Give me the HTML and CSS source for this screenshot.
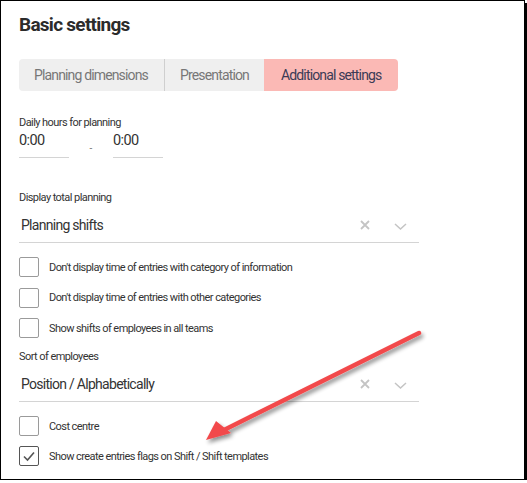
FILE: index.html
```html
<!DOCTYPE html>
<html>
<head>
<meta charset="utf-8">
<link rel="stylesheet" href="styles.css">
</head>
<body>
<div class="frame">
  <h1 class="title">Basic settings</h1>
  <div class="tabs">
    <div class="tab tab-dim">Planning dimensions</div>
    <div class="tab tab-pres">Presentation</div>
    <div class="tab tab-add active">Additional settings</div>
  </div>

  <div class="label label-hours">Daily hours for planning</div>
  <div class="hours">
    <div class="time">0:00</div>
    <div class="dash">-</div>
    <div class="time">0:00</div>
  </div>

  <div class="label label-display">Display total planning</div>
  <div class="select">
    <span class="select-value">Planning shifts</span>
    <span class="select-icons">
      <svg class="icon-x" width="10" height="10" viewBox="0 0 10 10"><path d="M1 1 L9 9 M9 1 L1 9" stroke="#c4c4c4" stroke-width="1.8" fill="none"/></svg>
      <svg class="icon-chev" width="13" height="7" viewBox="0 0 13 7"><path d="M1 1 L6.5 6 L12 1" stroke="#c4c4c4" stroke-width="1.5" fill="none"/></svg>
    </span>
  </div>

  <div class="checks">
    <div class="check"><span class="box"></span><span class="check-text">Don't display time of entries with category of information</span></div>
    <div class="check"><span class="box"></span><span class="check-text">Don't display time of entries with other categories</span></div>
    <div class="check"><span class="box"></span><span class="check-text">Show shifts of employees in all teams</span></div>
  </div>

  <div class="label label-sort">Sort of employees</div>
  <div class="select select-sort">
    <span class="select-value">Position / Alphabetically</span>
    <span class="select-icons">
      <svg class="icon-x" width="10" height="10" viewBox="0 0 10 10"><path d="M1 1 L9 9 M9 1 L1 9" stroke="#c4c4c4" stroke-width="1.8" fill="none"/></svg>
      <svg class="icon-chev" width="13" height="7" viewBox="0 0 13 7"><path d="M1 1 L6.5 6 L12 1" stroke="#c4c4c4" stroke-width="1.5" fill="none"/></svg>
    </span>
  </div>

  <div class="checks checks-bottom">
    <div class="check"><span class="box"></span><span class="check-text">Cost centre</span></div>
    <div class="check"><span class="box checked"><svg width="14" height="12" viewBox="0 0 14 12"><path d="M2 6.5 L5.5 10 L12 2.5" stroke="#555" stroke-width="1.6" fill="none"/></svg></span><span class="check-text">Show create entries flags on Shift / Shift templates</span></div>
  </div>

  <svg class="arrow" width="527" height="483" viewBox="0 0 527 483">
    <defs>
      <filter id="sh" x="-10%" y="-10%" width="130%" height="130%">
        <feGaussianBlur in="SourceAlpha" stdDeviation="2"/>
        <feOffset dx="2" dy="3"/>
        <feComponentTransfer><feFuncA type="linear" slope="0.45"/></feComponentTransfer>
        <feMerge><feMergeNode/><feMergeNode in="SourceGraphic"/></feMerge>
      </filter>
    </defs>
    <g filter="url(#sh)">
      <line x1="419" y1="333" x2="222" y2="431" stroke="#f24a4c" stroke-width="4.5" stroke-linecap="round"/>
      <polygon points="206,440 216,421 231,433" fill="#f24a4c"/>
    </g>
  </svg>
</div>
</body>
</html>
```

FILE: styles.css
```css
html, body {
  margin: 0;
  padding: 0;
  background: #fff;
}
body {
  font-family: Roboto, "Liberation Sans", sans-serif;
  color: #333;
}
.frame {
  position: relative;
  box-sizing: border-box;
  width: 525px;
  height: 480px;
  border: 1px solid #000;
  box-shadow: 2px 3px 0 #000;
  padding: 0 18px;
}
.title {
  margin: 11px 0 0 0;
  font-size: 19px;
  font-weight: 700;
  line-height: 26px;
  color: #2b2b2b;
  letter-spacing: -0.73px;
}
.tabs {
  display: flex;
  margin-top: 21px;
  height: 32px;
}
.tab {
  box-sizing: border-box;
  background: #efefef;
  color: #777;
  font-size: 14px;
  line-height: 32px;
  padding-left: 15px;
  letter-spacing: -0.85px;
  white-space: nowrap;
}
.tab-dim {
  width: 146px;
  border-radius: 4px 0 0 4px;
  border-right: 1px solid #cfcfcf;
}
.tab-pres {
  width: 99px;
}
.tab-add {
  width: 134px;
  padding-left: 17px;
}
.tab.active {
  background: #fbb9b5;
  color: #3b3b55;
  border-radius: 0 4px 4px 0;
}
.label {
  font-size: 11px;
  line-height: 13px;
  color: #333;
  letter-spacing: -0.57px;
  white-space: nowrap;
}
.label-hours {
  margin-top: 25px;
}
.hours {
  display: flex;
  align-items: flex-end;
  margin-top: 2px;
}
.time {
  width: 50px;
  border-bottom: 1px solid #d4d4d4;
  font-size: 14.5px;
  line-height: 20px;
  padding-bottom: 6px;
  color: #333;
  letter-spacing: -0.6px;
}
.dash {
  width: 44px;
  text-align: center;
  font-size: 10px;
  color: #777;
  line-height: 12px;
  padding-bottom: 3px;
}
.label-display {
  margin-top: 33px;
}
.select {
  display: flex;
  align-items: center;
  justify-content: space-between;
  width: 400px;
  height: 38px;
  margin-top: 1px;
  border-bottom: 1px solid #d4d4d4;
  padding-left: 2px;
  padding-top: 3px;
  box-sizing: border-box;
}
.select-value {
  font-size: 14px;
  color: #333;
  letter-spacing: -0.72px;
  white-space: nowrap;
}
.select-icons {
  display: flex;
  align-items: center;
  gap: 24px;
  padding-right: 12px;
}
.icon-chev {
  margin-top: 2px;
}
.checks {
  display: flex;
  flex-direction: column;
  gap: 10.5px;
  margin-top: 14px;
}
.check {
  display: flex;
  align-items: center;
  height: 20px;
}
.box {
  box-sizing: border-box;
  width: 20px;
  height: 20px;
  border: 1px solid #9a9a9a;
  border-radius: 2px;
  display: flex;
  align-items: center;
  justify-content: center;
}
.box.checked {
  border-color: #555;
}
.check-text {
  margin-left: 10px;
  font-size: 11px;
  color: #333;
  letter-spacing: -0.57px;
  white-space: nowrap;
}
.label-sort {
  margin-top: 12px;
}
.checks-bottom {
  margin-top: 14px;
  gap: 10px;
}
.arrow {
  position: absolute;
  left: -1px;
  top: -1px;
  pointer-events: none;
}
```
